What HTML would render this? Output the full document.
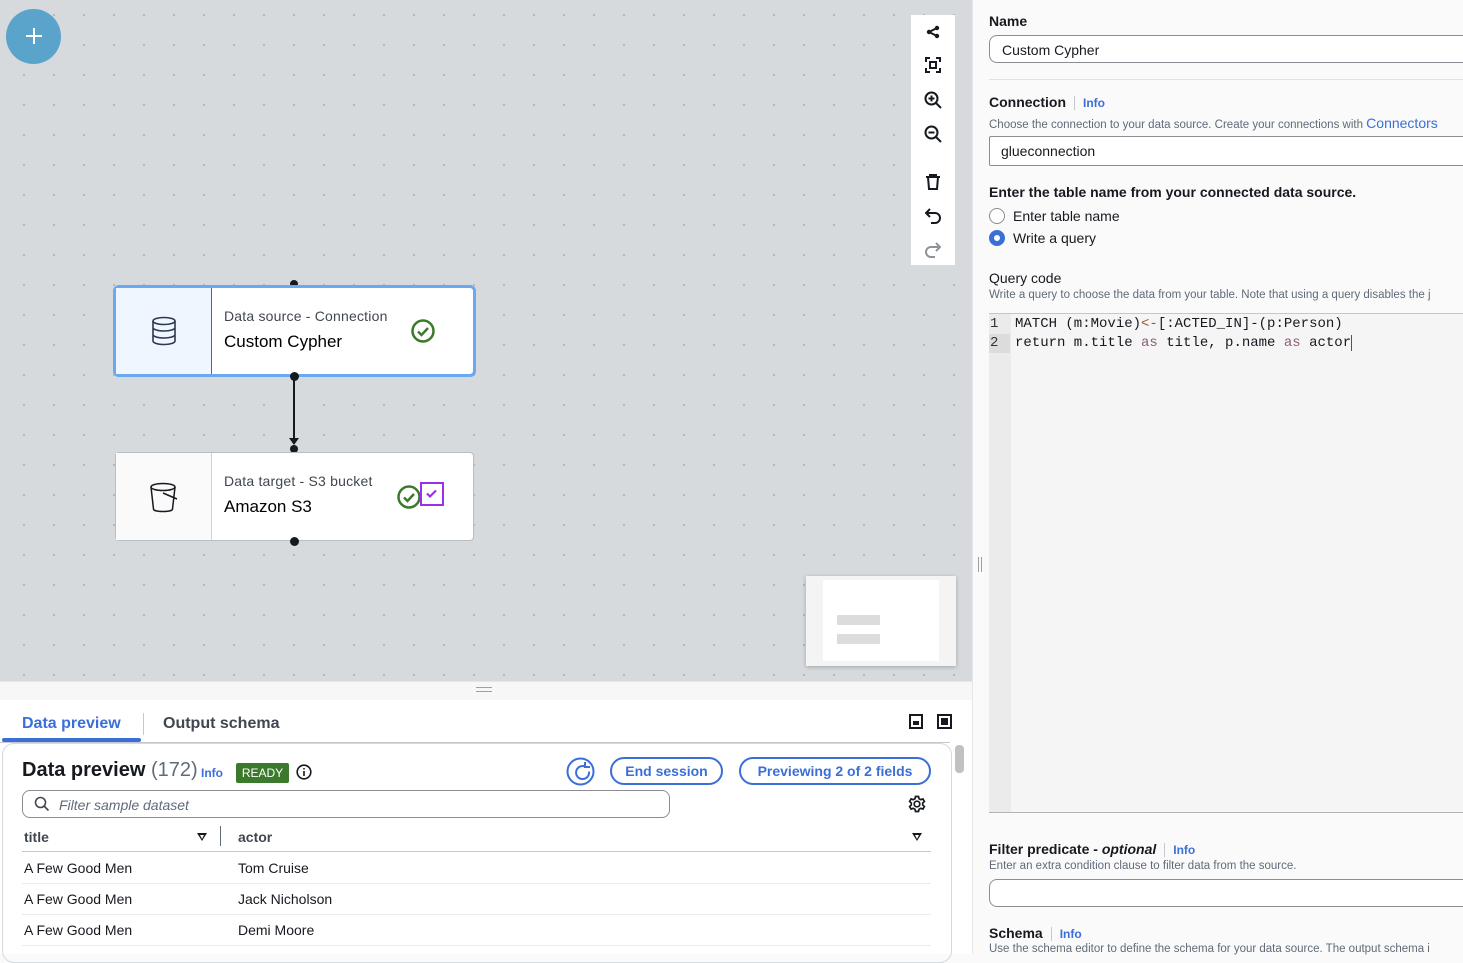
<!DOCTYPE html>
<html><head><meta charset="utf-8"><style>
*{box-sizing:border-box;margin:0;padding:0}
body{width:1463px;height:954px;overflow:hidden;font-family:"Liberation Sans",sans-serif;position:relative;background:#fafafa;color:#16191f}
.abs{position:absolute}
#canvas{left:0;top:0;width:972px;height:681px;background-color:#d6dadc;background-image:radial-gradient(circle,#adb2b7 0.8px,transparent 1.2px);background-size:30px 30px;background-position:9px 0px}
.node{position:absolute;background:#fff;border:1px solid #b9bec3;border-radius:4px;display:flex}
.node .ic{width:96px;border-right:1px solid #d0d4d8;display:flex;align-items:center;justify-content:center}
.node .sub{font-size:14px;color:#414750;letter-spacing:.2px}
.node .ttl{font-size:17px;color:#000;margin-top:8px}
.dot{position:absolute;width:9px;height:9px;border-radius:50%;background:#16191f}
.tb svg{display:block;margin:0 auto}
.lbl{font-size:14px;font-weight:bold;color:#16191f}
.info{color:#3b6fd8;font-size:12px;font-weight:bold;border-left:1px solid #c6c6cd;padding-left:8px;margin-left:8px}
.desc{font-size:11.5px;color:#5f6b7a}
.inp{border:1px solid #8c8c94;border-radius:8px;background:#fff;height:28px;font-size:14px;padding:5px 12px}
.btn{border:2px solid #3b6fd8;border-radius:16px;color:#3b6fd8;font-weight:bold;font-size:14px;text-align:center;line-height:24px;height:28px}
.row{position:absolute;left:22px;width:909px;height:31px;border-bottom:1px solid #e9ebed;font-size:14px;line-height:31px;padding-left:2px}
.row span{position:absolute;left:216px}
.mono{font-family:"Liberation Mono",monospace;font-size:14px}
.tri{position:absolute;width:0;height:0;border-left:5px solid transparent;border-right:5px solid transparent;border-top:8px solid #16191f}
.tri::after{content:"";position:absolute;left:-2.5px;top:-6.5px;border-left:2.5px solid transparent;border-right:2.5px solid transparent;border-top:4px solid #fff}
</style></head><body>
<div id="canvas" class="abs"></div>
<div class="abs" style="left:6px;top:9px;width:55px;height:55px;border-radius:50%;background:#5aa3cb"></div>
<div class="abs" style="left:26px;top:35px;width:16px;height:2px;background:#fff"></div>
<div class="abs" style="left:33px;top:28px;width:2px;height:16px;background:#fff"></div>

<div class="abs tb" style="left:911px;top:15px;width:44px;height:250px;background:#fff">
<svg class="abs" style="left:14px;top:9px" width="16" height="16" viewBox="0 0 16 16"><circle cx="4" cy="8" r="2.2" fill="#16191f"/><circle cx="12" cy="4" r="2.2" fill="#16191f"/><circle cx="12" cy="12" r="2.2" fill="#16191f"/><path d="M4 8L12 4M4 8L12 12" stroke="#16191f" stroke-width="2"/></svg>
<svg class="abs" style="left:14px;top:42px" width="16" height="16" viewBox="0 0 16 16" fill="none" stroke="#16191f" stroke-width="2"><path d="M1 5V1h4M11 1h4v4M15 11v4h-4M5 15H1v-4"/><rect x="5" y="5" width="6" height="6"/></svg>
<svg class="abs" style="left:13px;top:76px" width="18" height="18" viewBox="0 0 18 18" fill="none" stroke="#16191f" stroke-width="2"><circle cx="7.5" cy="7.5" r="6"/><path d="M12 12l5 5M7.5 4.5v6M4.5 7.5h6"/></svg>
<svg class="abs" style="left:13px;top:110px" width="18" height="18" viewBox="0 0 18 18" fill="none" stroke="#16191f" stroke-width="2"><circle cx="7.5" cy="7.5" r="6"/><path d="M12 12l5 5M4.5 7.5h6"/></svg>
<svg class="abs" style="left:14px;top:159px" width="16" height="16" viewBox="0 0 16 16" fill="none" stroke="#16191f" stroke-width="2"><path d="M1 3h14M5 3V1h6v2M3 3l1 12h8l1-12"/></svg>
<svg class="abs" style="left:14px;top:193px" width="16" height="16" viewBox="0 0 16 16" fill="none" stroke="#16191f" stroke-width="2"><path d="M5 1L1 5l4 4M1 5h9a5 5 0 010 10H6"/></svg>
<svg class="abs" style="left:14px;top:227px" width="16" height="16" viewBox="0 0 16 16" fill="none" stroke="#8d9399" stroke-width="2"><path d="M11 1l4 4-4 4M15 5H6a5 5 0 000 10h4"/></svg>
</div>

<div class="dot" style="left:290px;top:280px;width:8px;height:8px"></div>
<div class="node" style="left:113px;top:285px;width:363px;height:92px;border:3px solid #6aa8f0;border-radius:6px">
<div class="ic" style="background:#eff6ff;border-right:1px solid #4a6a9a;width:96px"><svg width="26" height="30" viewBox="0 0 26 30" fill="none" stroke="#2d3a4e" stroke-width="1.6"><ellipse cx="13" cy="5" rx="11" ry="3.5"/><path d="M2 5v20c0 2 5 3.5 11 3.5s11-1.5 11-3.5V5M2 11.5c0 2 5 3.5 11 3.5s11-1.5 11-3.5M2 18.5c0 2 5 3.5 11 3.5s11-1.5 11-3.5"/></svg></div>
<div style="padding:20px 0 0 12px"><div class="sub">Data source - Connection</div><div class="ttl">Custom Cypher</div></div>
<svg class="abs" style="left:295px;top:31px" width="24" height="24" viewBox="0 0 24 24" fill="none" stroke="#3b7a2c" stroke-width="2.5"><circle cx="12" cy="12" r="10.5"/><path d="M7 12.5l3.5 3.5 6.5-7"/></svg>
</div>
<div class="dot" style="left:290px;top:372px"></div>
<div class="abs" style="left:293px;top:380px;width:2px;height:60px;background:#16191f"></div>
<div class="abs" style="left:289px;top:438px;width:0;height:0;border-left:5px solid transparent;border-right:5px solid transparent;border-top:7px solid #16191f"></div>
<div class="dot" style="left:290px;top:445px;width:8px;height:8px"></div>
<div class="node" style="left:115px;top:452px;width:359px;height:89px">
<div class="ic" style="background:#fafafa"><svg width="30" height="32" viewBox="0 0 30 32" fill="none" stroke="#16191f" stroke-width="1.5"><ellipse cx="14" cy="6" rx="12" ry="3.5"/><path d="M2 6l2.5 22c0 1.5 4 2.5 9.5 2.5s9.5-1 9.5-2.5L26 6M14 12l14 6"/></svg></div>
<div style="padding:20px 0 0 12px"><div class="sub">Data target - S3 bucket</div><div class="ttl">Amazon S3</div></div>
<svg class="abs" style="left:281px;top:32px" width="24" height="24" viewBox="0 0 24 24" fill="none" stroke="#3b7a2c" stroke-width="2.5"><circle cx="12" cy="12" r="10.5"/><path d="M7 12.5l3.5 3.5 6.5-7"/></svg>
<div class="abs" style="left:304px;top:29px;width:24px;height:24px;border:2.5px solid #9a2ff0"><svg width="19" height="19" viewBox="0 0 19 19" fill="none" stroke="#9a2ff0" stroke-width="2.2"><path d="M5 9.5l3 3 6-6"/></svg></div>
</div>
<div class="dot" style="left:290px;top:537px"></div>

<div class="abs" style="left:806px;top:576px;width:150px;height:90px;background:#f4f4f4;box-shadow:0 1px 4px rgba(0,0,0,.25)"><div class="abs" style="left:17px;top:4px;width:116px;height:81px;background:#fff"></div><div class="abs" style="left:31px;top:39px;width:43px;height:10px;background:#dcdcdc"></div><div class="abs" style="left:31px;top:58px;width:43px;height:10px;background:#dcdcdc"></div></div>

<div class="abs" style="left:972px;top:0;width:1px;height:954px;background:#e5e7ea"></div>
<div class="abs" style="left:978px;top:557px;width:1px;height:15px;background:#9aa0a6"></div>
<div class="abs" style="left:981px;top:557px;width:1px;height:15px;background:#9aa0a6"></div>

<div class="abs" style="left:0;top:681px;width:972px;height:273px;background:#fff;border-top:1px solid #e5e7ea"></div>
<div class="abs" style="left:0;top:682px;width:972px;height:18px;background:#f7f7f7"></div>
<div class="abs" style="left:476px;top:687px;width:16px;height:1px;background:#9aa0a6"></div>
<div class="abs" style="left:476px;top:691px;width:16px;height:1px;background:#9aa0a6"></div>
<div class="abs" style="left:22px;top:715px;font-size:16px;font-weight:bold;color:#3b6fd8">Data preview</div>
<div class="abs" style="left:143px;top:713px;width:1px;height:22px;background:#c6c6cd"></div>
<div class="abs" style="left:163px;top:715px;font-size:16px;font-weight:bold;color:#414750">Output schema</div>
<div class="abs" style="left:2px;top:738px;width:139px;height:4px;background:#3b6fd8;border-radius:2px"></div>
<div class="abs" style="left:0;top:742px;width:950px;height:1px;background:#c6c6cd"></div>
<div class="abs" style="left:909px;top:714px;width:14px;height:15px;border:2px solid #16191f"><div style="margin:5px 2px 0;height:4px;background:#16191f"></div></div>
<div class="abs" style="left:937px;top:714px;width:15px;height:15px;border:2px solid #16191f"><div style="margin:2px;height:7px;background:#16191f"></div></div>
<div class="abs" style="left:2px;top:743px;width:950px;height:220px;border:1px solid #d5d9dc;border-radius:12px"></div>
<div class="abs" style="left:955px;top:745px;width:9px;height:28px;background:#c1c1c1;border-radius:4px"></div>
<div class="abs" style="left:22px;top:759px;font-size:20px;font-weight:bold">Data preview <span style="font-weight:normal;color:#5f6b7a">(172)</span></div>
<div class="abs" style="left:201px;top:766px;font-size:12px;font-weight:bold;color:#3b6fd8">Info</div>
<div class="abs" style="left:236px;top:763px;width:53px;height:20px;background:#3b7a2c;color:#fff;font-size:12px;text-align:center;line-height:20px;border-radius:2px">READY</div>
<svg class="abs" style="left:296px;top:764px" width="16" height="16" viewBox="0 0 16 16" fill="none" stroke="#16191f" stroke-width="1.6"><circle cx="8" cy="8" r="6.8"/><path d="M8 7v5M8 4v1.5"/></svg>
<svg class="abs" style="left:566px;top:757px" width="29" height="29" viewBox="0 0 29 29" fill="none" stroke="#3b6fd8" stroke-width="2"><circle cx="14.5" cy="14.5" r="13"/><path d="M19 9.5a6.5 6.5 0 104 5M19 5v5h5"/></svg>
<div class="abs btn" style="left:610px;top:757px;width:113px">End session</div>
<div class="abs btn" style="left:739px;top:757px;width:192px">Previewing 2 of 2 fields</div>
<div class="abs" style="left:22px;top:790px;width:648px;height:28px;border:1px solid #8c8c94;border-radius:8px;background:#fff"></div>
<svg class="abs" style="left:34px;top:796px" width="16" height="16" viewBox="0 0 16 16" fill="none" stroke="#414750" stroke-width="1.6"><circle cx="6.5" cy="6.5" r="5"/><path d="M10 10l4.5 4.5"/></svg>
<div class="abs" style="left:59px;top:797px;font-size:14px;font-style:italic;color:#5f6b7a">Filter sample dataset</div>
<svg class="abs" style="left:908px;top:795px" width="18" height="18" viewBox="0 0 18 18" fill="none" stroke="#16191f" stroke-width="1.7"><circle cx="9" cy="9" r="2.8"/><path d="M7.5 1.5h3l.5 2.2 1.8 1 2.1-.8 1.5 2.6-1.7 1.5v2l1.7 1.5-1.5 2.6-2.1-.8-1.8 1-.5 2.2h-3l-.5-2.2-1.8-1-2.1.8-1.5-2.6 1.7-1.5v-2L1.6 6.5 3.1 3.9l2.1.8 1.8-1z"/></svg>
<div class="abs" style="left:24px;top:829px;font-size:14px;font-weight:bold;color:#414750">title</div>
<div class="tri" style="left:197px;top:833px"></div>
<div class="abs" style="left:220px;top:826px;width:1px;height:20px;background:#5f6b7a"></div>
<div class="abs" style="left:238px;top:829px;font-size:14px;font-weight:bold;color:#414750">actor</div>
<div class="tri" style="left:912px;top:833px"></div>
<div class="abs" style="left:22px;top:851px;width:909px;height:1px;background:#c6c6cd"></div>
<div class="row" style="top:853px">A Few Good Men<span>Tom Cruise</span></div>
<div class="row" style="top:884px">A Few Good Men<span>Jack Nicholson</span></div>
<div class="row" style="top:915px">A Few Good Men<span>Demi Moore</span></div>

<div class="abs lbl" style="left:989px;top:13px">Name</div>
<div class="abs inp" style="left:989px;top:35px;width:490px;height:28px;padding-top:6px">Custom Cypher</div>
<div class="abs" style="left:989px;top:79px;width:480px;height:1px;background:#e0e2e5"></div>
<div class="abs lbl" style="left:989px;top:94px">Connection<span class="info">Info</span></div>
<div class="abs desc" style="left:989px;top:115px;white-space:nowrap">Choose the connection to your data source. Create your connections with <span style="color:#3b6fd8;font-size:14px">Connectors</span></div>
<div class="abs inp" style="left:989px;top:136px;width:490px;height:30px;border-radius:2px;padding-left:11px;padding-top:6px">glueconnection</div>
<div class="abs lbl" style="left:989px;top:184px">Enter the table name from your connected data source.</div>
<div class="abs" style="left:989px;top:208px;width:16px;height:16px;border:1.5px solid #8c8c94;border-radius:50%;background:#fff"></div>
<div class="abs" style="left:1013px;top:208px;font-size:14px">Enter table name</div>
<div class="abs" style="left:989px;top:230px;width:16px;height:16px;border:5px solid #3b6fd8;border-radius:50%;background:#fff"></div>
<div class="abs" style="left:1013px;top:230px;font-size:14px">Write a query</div>
<div class="abs" style="left:989px;top:270px;font-size:14px">Query code</div>
<div class="abs desc" style="left:989px;top:289px;white-space:nowrap">Write a query to choose the data from your table. Note that using a query disables the j</div>
<div class="abs" style="left:989px;top:313px;width:480px;height:500px;background:#f5f5f5;border-top:1px solid #c6c6cd;border-bottom:1px solid #b0b4b8"></div>
<div class="abs" style="left:989px;top:314px;width:22px;height:498px;background:#ebebeb"></div>
<div class="abs mono" style="left:990px;top:314px;line-height:19px;color:#333;padding-top:1px">1<br><span style="display:inline-block;background:#dcdcdc;width:21px;margin-left:-1px;padding-left:1px">2</span></div>
<div class="abs mono" style="left:1015px;top:315px;line-height:19px;color:#16191f;white-space:pre">MATCH (m:Movie)<span style="color:#a0522d">&lt;-</span>[:ACTED_IN]-(p:Person)
return m.title <span style="color:#8b5a7a">as</span> title, p.name <span style="color:#8b5a7a">as</span> actor<span style="border-left:1px solid #555"></span></div>
<div class="abs lbl" style="left:989px;top:841px">Filter predicate - <i>optional</i><span class="info">Info</span></div>
<div class="abs desc" style="left:989px;top:860px">Enter an extra condition clause to filter data from the source.</div>
<div class="abs inp" style="left:989px;top:879px;width:490px;height:28px"></div>
<div class="abs lbl" style="left:989px;top:925px">Schema<span class="info">Info</span></div>
<div class="abs desc" style="left:989px;top:943px;white-space:nowrap">Use the schema editor to define the schema for your data source. The output schema i</div>
</body></html>
